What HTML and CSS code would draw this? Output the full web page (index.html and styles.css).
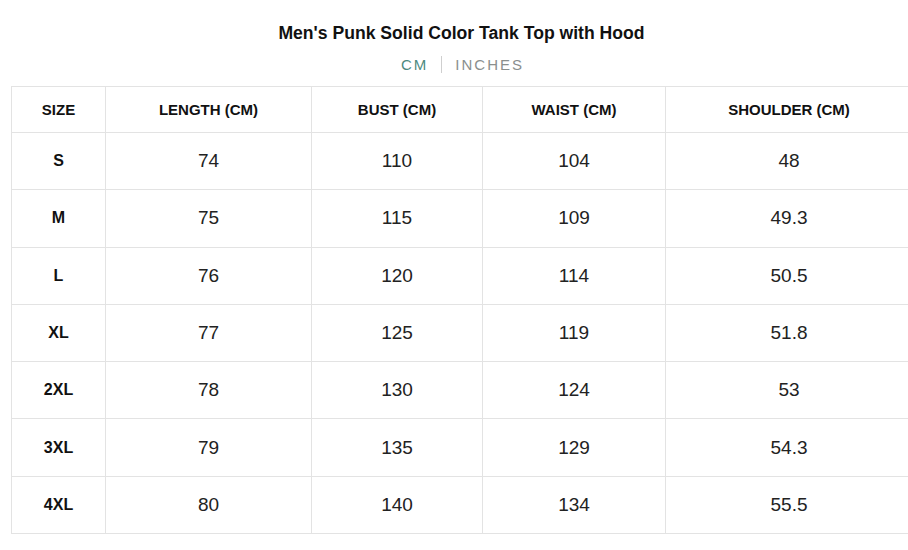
FILE: index.html
```html
<!DOCTYPE html>
<html>
<head>
<meta charset="utf-8">
<link rel="stylesheet" href="styles.css">
</head>
<body>
<div class="page">
  <h1 class="title">Men's Punk Solid Color Tank Top with Hood</h1>
  <div class="units">
    <span class="unit active">CM</span>
    <span class="sep"></span>
    <span class="unit">INCHES</span>
  </div>
  <table class="chart">
    <colgroup>
      <col class="c1"><col class="c2"><col class="c3"><col class="c4"><col class="c5">
    </colgroup>
    <thead>
      <tr><th>SIZE</th><th>LENGTH (CM)</th><th>BUST (CM)</th><th>WAIST (CM)</th><th>SHOULDER (CM)</th></tr>
    </thead>
    <tbody>
      <tr><th>S</th><td>74</td><td>110</td><td>104</td><td>48</td></tr>
      <tr><th>M</th><td>75</td><td>115</td><td>109</td><td>49.3</td></tr>
      <tr><th>L</th><td>76</td><td>120</td><td>114</td><td>50.5</td></tr>
      <tr><th>XL</th><td>77</td><td>125</td><td>119</td><td>51.8</td></tr>
      <tr><th>2XL</th><td>78</td><td>130</td><td>124</td><td>53</td></tr>
      <tr><th>3XL</th><td>79</td><td>135</td><td>129</td><td>54.3</td></tr>
      <tr><th>4XL</th><td>80</td><td>140</td><td>134</td><td>55.5</td></tr>
    </tbody>
  </table>
</div>
</body>
</html>
```
FILE: styles.css
```css
html, body {
  margin: 0;
  padding: 0;
  background: #fff;
  overflow: hidden;
}
body {
  width: 908px;
  height: 550px;
  font-family: "Liberation Sans", Arial, sans-serif;
  color: #111;
}
.page {
  width: 901px;
  padding: 23px 0 0 11px;
}
.title {
  margin: 0;
  font-size: 17.6px;
  font-weight: bold;
  line-height: 20px;
  text-align: center;
  color: #111;
}
.units {
  display: flex;
  justify-content: center;
  align-items: center;
  gap: 13px;
  margin-top: 12px;
  height: 18px;
  padding-left: 2px;
  font-size: 15px;
  letter-spacing: 2px;
  color: #8a8f8e;
}
.unit.active {
  color: #4d8a80;
}
.sep {
  width: 1px;
  height: 17px;
  background: #cfcfcf;
}
.chart {
  margin-top: 13px;
  border-collapse: collapse;
  table-layout: fixed;
  width: 901px;
}
.c1 { width: 94px; }
.c2 { width: 206px; }
.c3 { width: 171px; }
.c4 { width: 183px; }
.c5 { width: 247px; }
.chart th, .chart td {
  border: 1px solid #e3e3e3;
  text-align: center;
  padding: 0;
}
.chart thead th {
  height: 45px;
  font-size: 15px;
  font-weight: bold;
  color: #111;
}
.chart tbody tr {
  height: 57.3px;
}
.chart tbody th {
  font-size: 16px;
  font-weight: bold;
  color: #111;
}
.chart tbody td {
  font-size: 19px;
  color: #222;
}
```
